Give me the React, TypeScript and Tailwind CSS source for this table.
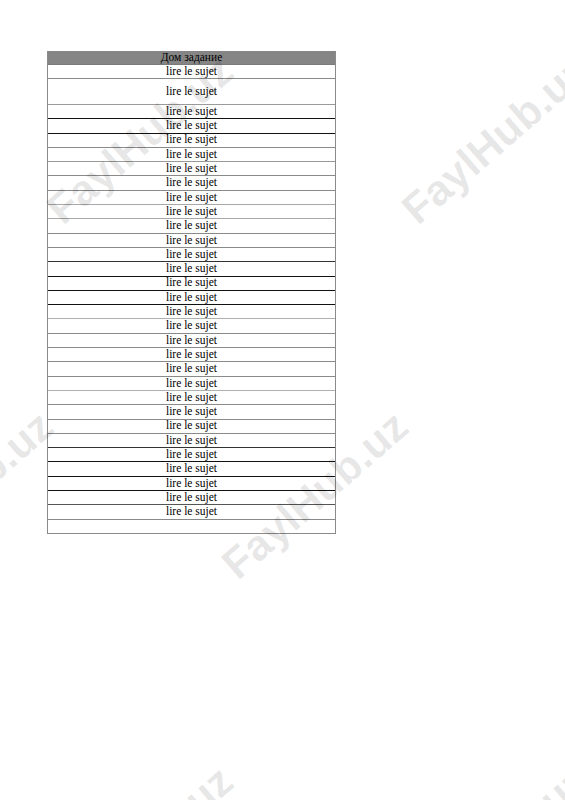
const rowLines = [
  "#8a8a8a", "#9a9a9a", "#111111", "#111111", "#8a8a8a", "#9a9a9a", "#8a8a8a", "#8a8a8a",
  "#a8a8a8", "#a8a8a8", "#8a8a8a", "#8a8a8a", "#333333", "#111111", "#111111", "#111111",
  "#b0b0b0", "#8a8a8a", "#8a8a8a", "#8a8a8a", "#8a8a8a", "#b0b0b0", "#8a8a8a", "#8a8a8a",
  "#8a8a8a", "#333333", "#111111", "#111111", "#111111", "#555555", "#8a8a8a",
];

const marks = [
  { x: 140, y: 140 },
  { x: 495, y: 140 },
  { x: -40, y: 495 },
  { x: 315, y: 495 },
  { x: 140, y: 850 },
  { x: 495, y: 850 },
];

function Watermark({ x, y }: { x: number; y: number }) {
  return (
    <span
      className="absolute -translate-x-1/2 -translate-y-1/2 -rotate-[41deg] whitespace-nowrap font-['Liberation_Sans',Arial,sans-serif] text-[43px] font-bold leading-none text-black/[0.1] pointer-events-none select-none"
      style={{ left: x, top: y }}
    >
      FaylHub.uz
    </span>
  );
}

export default function App() {
  return (
    <div className="relative w-[565px] h-[800px] overflow-hidden bg-white">
      <div className="ml-[47px] pt-[51px] w-[289px] font-['Liberation_Serif','Times_New_Roman',serif] text-[11.5px] font-normal leading-none text-black">
        <div className="border-x border-[#8a8a8a]">
          <div className="h-[14px] flex items-center justify-center bg-[#858585] border-b border-[#7a7a7a]">
            Дом задание
          </div>
          {rowLines.map((c, i) => (
            <div
              key={i}
              className={
                i === 1
                  ? "h-[26px] flex items-center justify-center border-b"
                  : i === 0
                  ? "h-[14px] flex items-center justify-center border-b"
                  : "h-[14.3px] flex items-center justify-center border-b"
              }
              style={{ borderColor: c }}
            >
              lire le sujet
            </div>
          ))}
          <div className="h-[14px] border-b border-[#8a8a8a]" />
        </div>
      </div>
      {marks.map((m, i) => (
        <Watermark key={i} x={m.x} y={m.y} />
      ))}
    </div>
  );
}
